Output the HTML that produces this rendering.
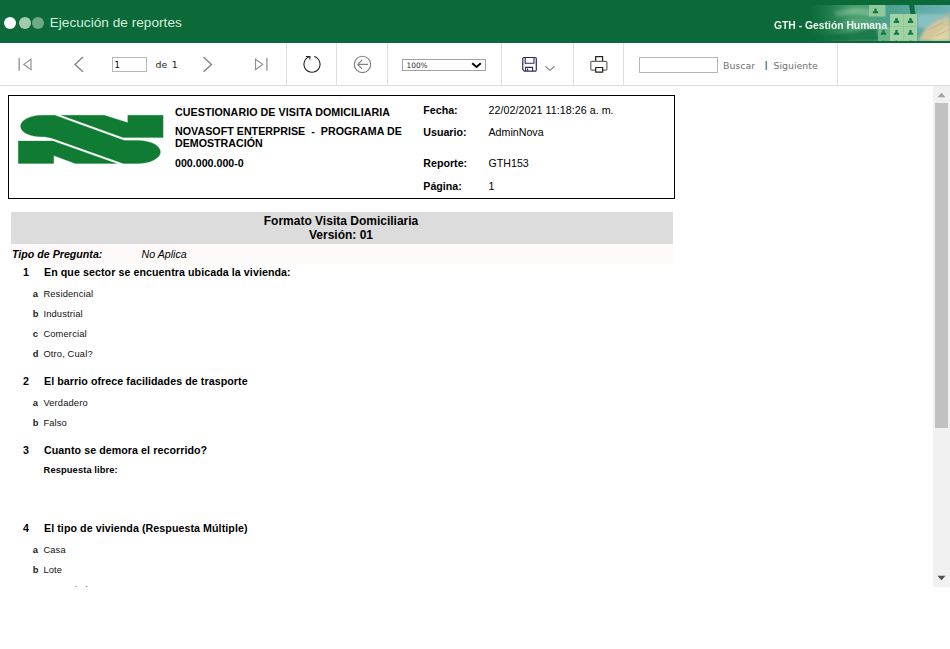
<!DOCTYPE html>
<html lang="es">
<head>
<meta charset="utf-8">
<title>Ejecución de reportes</title>
<style>
html,body{margin:0;padding:0;background:#fff;}
body{width:950px;height:649px;position:relative;overflow:hidden;font-family:"Liberation Sans",Arial,sans-serif;color:#000;}
.abs{position:absolute;white-space:nowrap;line-height:1;}
#hdr{position:absolute;left:0;top:0;width:950px;height:43px;background:#0b693a;overflow:hidden;}
#hdr .dot{position:absolute;top:17px;width:12px;height:12px;border-radius:50%;}
#title{left:49.7px;top:16px;font-size:13.6px;letter-spacing:0.03px;color:#d4eedb;}
#mod{left:774px;top:20px;font-size:11px;font-weight:bold;color:#eefaf0;transform-origin:0 0;transform:scaleX(0.94);}
#tb{position:absolute;left:0;top:43px;width:950px;height:42px;background:#fff;border-bottom:1px solid #dcdcdc;}
.sep{position:absolute;top:0;width:1px;height:42px;background:#e0e0e0;}
.vd{font-family:"DejaVu Sans",Verdana,sans-serif;}
#view{position:absolute;left:0;top:86px;width:933px;height:501px;overflow:hidden;background:#fff;}
#sb{position:absolute;left:933px;top:86px;width:17px;height:501px;background:#f1f1f1;}
.b{font-weight:bold;}
.t8{font-size:10.67px;}
.t7{font-size:9.33px;}
</style>
</head>
<body>
<div id="hdr">
  <!--PH--><svg class="abs" style="left:800px;top:5px" width="150" height="36" viewBox="800 5 150 36"><defs><linearGradient id="pf" gradientUnits="userSpaceOnUse" x1="808" y1="0" x2="852" y2="0"><stop offset="0" stop-color="#fff" stop-opacity="0"/><stop offset="1" stop-color="#fff" stop-opacity="1"/></linearGradient><mask id="pm" maskUnits="userSpaceOnUse" x="800" y="5" width="150" height="36"><rect x="800" y="5" width="150" height="36" fill="url(#pf)"/></mask><linearGradient id="pbg" gradientUnits="userSpaceOnUse" x1="820" y1="0" x2="950" y2="0"><stop offset="0" stop-color="#358d5e"/><stop offset="0.3" stop-color="#4c9f72"/><stop offset="0.55" stop-color="#4da290"/><stop offset="1" stop-color="#6fb2b4"/></linearGradient><filter id="bl" x="-5%" y="-20%" width="110%" height="140%"><feGaussianBlur stdDeviation="0.6"/></filter><filter id="bl2" x="-5%" y="-20%" width="110%" height="140%"><feGaussianBlur stdDeviation="1.6"/></filter></defs><g mask="url(#pm)"><rect x="800" y="5" width="150" height="36" fill="url(#pbg)"/><g filter="url(#bl2)"><path d="M800 41L800 33Q840 38 876 27L880 41z" fill="#126f42" opacity="0.8"/><path d="M834 11Q856 6 872 10L872 16Q856 12 836 17z" fill="#7dbb93" opacity="0.85"/><path d="M842 21Q860 17 876 24L874 28Q860 22 843 26z" fill="#62ab82" opacity="0.6"/><path d="M918 41L924 31Q934 19 950 13L950 41z" fill="#d3c698"/><path d="M930 41L940 31L950 25L950 41z" fill="#e0d3a8"/><path d="M917 14h33v3q-14 3-24 12l-9-2z" fill="#8cc3c6" opacity="0.9"/></g><g filter="url(#bl)"><path d="M909 5h5l1.500 9h-5z" fill="#0e6b45"/><path d="M932 20L950 14M928 30L944 22M936 36L950 29" stroke="#bfae80" stroke-width="0.800" fill="none"/><rect x="869" y="5" width="16.500" height="11.500" fill="#8fc99a"/><rect x="878" y="27" width="12" height="14" fill="#6db487"/><rect x="890" y="14" width="27" height="27" fill="#a2d2a3"/><path d="M903.500 14v27M890 26.500h27" stroke="#8cc696" stroke-width="0.800"/><circle cx="875.5" cy="9.7" r="1.32" fill="#117a4c"/><path d="M872.7 13.3q0-2.800 2.8-2.800q2.8 0 2.8 2.800z" fill="#117a4c"/><circle cx="896.5" cy="19.3" r="1.32" fill="#117a4c"/><path d="M893.7 22.9q0-2.800 2.8-2.800q2.8 0 2.8 2.800z" fill="#117a4c"/><circle cx="910.5" cy="19.3" r="1.32" fill="#117a4c"/><path d="M907.7 22.9q0-2.800 2.8-2.800q2.8 0 2.8 2.800z" fill="#117a4c"/><circle cx="896.5" cy="31.1" r="1.32" fill="#117a4c"/><path d="M893.7 34.7q0-2.800 2.8-2.800q2.8 0 2.8 2.800z" fill="#117a4c"/><circle cx="910.5" cy="31.1" r="1.32" fill="#117a4c"/><path d="M907.7 34.7q0-2.800 2.8-2.800q2.8 0 2.8 2.800z" fill="#117a4c"/><circle cx="883.5" cy="31.1" r="1.32" fill="#117a4c"/><path d="M880.7 34.7q0-2.800 2.8-2.800q2.8 0 2.8 2.800z" fill="#117a4c"/><circle cx="896.5" cy="41.7" r="1.32" fill="#117a4c"/><path d="M893.7 45.3q0-2.800 2.8-2.800q2.8 0 2.8 2.800z" fill="#117a4c"/><circle cx="910.5" cy="41.7" r="1.32" fill="#117a4c"/><path d="M907.7 45.3q0-2.800 2.8-2.800q2.8 0 2.8 2.800z" fill="#117a4c"/><circle cx="883.5" cy="41.7" r="1.32" fill="#117a4c"/><path d="M880.7 45.3q0-2.800 2.8-2.800q2.8 0 2.8 2.800z" fill="#117a4c"/></g></g></svg><!--/PH-->
  <div class="dot" style="left:4px;background:#ffffff;"></div>
  <div class="dot" style="left:18.5px;background:#a3cbb0;"></div>
  <div class="dot" style="left:32px;background:#6fa986;"></div>
  <div id="title" class="abs">Ejecución de reportes</div>
  <div id="mod" class="abs">GTH - Gestión Humana</div>
</div>

<div id="tb">
  <div class="sep" style="left:286px"></div>
  <div class="sep" style="left:336px"></div>
  <div class="sep" style="left:387px"></div>
  <div class="sep" style="left:501px"></div>
  <div class="sep" style="left:573px"></div>
  <div class="sep" style="left:623px"></div>
  <div class="sep" style="left:837px"></div>
  <svg id="ico" class="abs" style="left:0;top:0" width="950" height="42" viewBox="0 43 950 42" fill="none">
    <!-- first -->
    <path d="M19.200 58V70.700" stroke="#909090" stroke-width="1.300"/>
    <path d="M31 59.200L23.800 64.400L31 69.600z" stroke="#909090" stroke-width="1.150"/>
    <!-- prev -->
    <path d="M83 57.100L75 64.400L83 71.700" stroke="#848484" stroke-width="1.400"/>
    <!-- next -->
    <path d="M203.500 57.100L211.500 64.400L203.500 71.700" stroke="#848484" stroke-width="1.400"/>
    <!-- last -->
    <path d="M266.900 58V70.700" stroke="#909090" stroke-width="1.300"/>
    <path d="M255.500 59.200L262.700 64.400L255.500 69.600z" stroke="#909090" stroke-width="1.150"/>
    <!-- refresh -->
    <path d="M314.200 56.600A8 8 0 1 1 309.800 56.600" stroke="#222" stroke-width="1.050"/>
    <path d="M306 56.500H309.900V59.600" stroke="#222" stroke-width="1.100"/>
    <!-- back -->
    <circle cx="362.500" cy="64.400" r="8.200" stroke="#808080" stroke-width="1.100"/>
    <path d="M357.800 64.400h10.200M362 60L357.700 64.400L362 68.800" stroke="#808080" stroke-width="1.100"/>
    <!-- save -->
    <path d="M523.800 57.500h11.500q1 0 1 1v11.600q0 1-1 1h-11l-1.500-1.500v-11.100q0-1 1-1z" stroke="#2e2a55" stroke-width="1.200"/>
    <path d="M525.200 57.500v5.800h8.800v-5.800" stroke="#2e2a55" stroke-width="1.100"/>
    <path d="M525.600 71v-3.600h7v3.600M527.600 68.500v2.200" stroke="#2e2a55" stroke-width="1.100"/>
    <path d="M545.500 66.300L550 70.300L554.500 66.300" stroke="#777" stroke-width="1.100"/>
    <!-- print -->
    <path d="M595.700 61.300v-4.600h6.900v4.600" stroke="#222" stroke-width="1.200"/>
    <path d="M595.700 70.200h-3.800q-1.100 0-1.100-1.100v-6.700q0-1.100 1.100-1.100h13.900q1.100 0 1.100 1.100v6.700q0 1.100-1.100 1.100h-3.200" stroke="#6a6a5a" stroke-width="1.200"/>
    <path d="M595.700 67.500h6.900v4.700h-6.900z" stroke="#222" stroke-width="1.200"/>
  </svg>
  <div class="abs" style="left:112px;top:14px;width:33px;height:13px;border:1px solid #b8b8b8;"></div>
  <div class="abs vd" style="left:114.500px;top:18px;font-size:8.500px;">1</div>
  <div class="abs vd" style="left:155.500px;top:17px;font-size:9.400px;color:#222;word-spacing:1.500px;">de 1</div>
  <div class="abs" style="left:402px;top:16px;width:82px;height:10px;border:1px solid #a2a2a2;"></div>
  <div class="abs vd" style="left:406.500px;top:19px;font-size:7.400px;color:#2a2a2a;">100%</div>
  <svg class="abs" style="left:469.700px;top:18px" width="14" height="8" viewBox="0 0 14 8" fill="none"><path d="M2.200 2.300L6.500 6L10.800 2.300" stroke="#000" stroke-width="2"/></svg>
  <div class="abs" style="left:639px;top:14px;width:77px;height:14px;border:1px solid #b5b5b5;"></div>
  <div class="abs vd" style="left:723px;top:18px;font-size:9.400px;color:#727272;">Buscar</div>
  <div class="abs vd" style="left:764.6px;top:18px;font-size:9px;color:#134b6b;font-weight:bold;">|</div>
  <div class="abs vd" style="left:773.500px;top:18px;font-size:9.400px;color:#727272;">Siguiente</div>
</div>

<div id="view">
  <div id="rpt" style="position:absolute;left:0;top:-86px;width:933px;height:700px;">
    <div class="abs" style="left:8px;top:95px;width:665px;height:102px;border:1px solid #000;"></div>
    <div class="abs" style="left:11px;top:212px;width:662px;height:32px;background:#dcdcdc;"></div>
    <div class="abs" style="left:11px;top:244px;width:662px;height:20px;background:#fffafa;"></div>
    <!--LG--><svg class="abs" style="left:10px;top:108px" width="160" height="62" viewBox="10 108 160 62"><g fill="#0f7b33" stroke="#0f7b33" stroke-width="0.3"><path d="M42 115.2H54.7L124.4 140.5H138C150.5 140.5 160.4 145.6 160.4 152C160.4 158.3 150.5 163.4 138 163.4H123.2L52 138.2L45 136.800H42C30 136.800 20.600 132.200 20.600 126.300C20.600 120.200 30 115.200 42 115.200Z"/><path d="M61.3 115.2H104.3L127.8 122.8V115.2H163.1V137.6H123Z"/><path d="M18.3 141H53L116.400 163.4H75.2L53.7 155.5V163.4H18.3Z"/></g></svg><!--/LG-->
    <!--RT-->
    <div class="abs b" style="left:175px;top:107px;font-size:10.67px;letter-spacing:0.07px;">CUESTIONARIO DE VISITA DOMICILIARIA</div>
    <div class="abs b" style="left:175px;top:126px;font-size:10.67px;letter-spacing:0.04px;">NOVASOFT ENTERPRISE &nbsp;- &nbsp;PROGRAMA DE</div>
    <div class="abs b" style="left:175px;top:138px;font-size:10.67px;">DEMOSTRACIÓN</div>
    <div class="abs b" style="left:175px;top:158px;font-size:10.67px;">000.000.000-0</div>
    <div class="abs b" style="left:423.3px;top:105px;font-size:10.67px;">Fecha:</div>
    <div class="abs b" style="left:423.3px;top:127px;font-size:10.67px;">Usuario:</div>
    <div class="abs b" style="left:423.3px;top:158px;font-size:10.67px;">Reporte:</div>
    <div class="abs b" style="left:423.3px;top:181px;font-size:10.67px;">Página:</div>
    <div class="abs " style="left:488.5px;top:105px;font-size:10.67px;letter-spacing:0.06px;">22/02/2021 11:18:26 a. m.</div>
    <div class="abs " style="left:488.5px;top:127px;font-size:10.67px;">AdminNova</div>
    <div class="abs " style="left:488.5px;top:158px;font-size:10.67px;">GTH153</div>
    <div class="abs " style="left:488.5px;top:181px;font-size:10.67px;">1</div>
    <div class="abs b" style="left:12px;top:249px;font-size:10.67px;font-style:italic;">Tipo de Pregunta:</div>
    <div class="abs " style="left:141.5px;top:249px;font-size:10.67px;font-style:italic;">No Aplica</div>
    <div class="abs b" style="left:23px;top:267px;font-size:10.67px;">1</div>
    <div class="abs b" style="left:44px;top:267px;font-size:10.67px;letter-spacing:0.07px;">En que sector se encuentra ubicada la vivienda:</div>
    <div class="abs b" style="left:23px;top:376px;font-size:10.67px;">2</div>
    <div class="abs b" style="left:44px;top:376px;font-size:10.67px;letter-spacing:0.07px;">El barrio ofrece facilidades de trasporte</div>
    <div class="abs b" style="left:23px;top:445px;font-size:10.67px;">3</div>
    <div class="abs b" style="left:44px;top:445px;font-size:10.67px;letter-spacing:0.07px;">Cuanto se demora el recorrido?</div>
    <div class="abs b" style="left:23px;top:523px;font-size:10.67px;">4</div>
    <div class="abs b" style="left:44px;top:523px;font-size:10.67px;letter-spacing:0.07px;">El tipo de vivienda (Respuesta Múltiple)</div>
    <div class="abs b" style="left:32.8px;top:290px;font-size:9.33px;color:#1a1a1a;">a</div>
    <div class="abs " style="left:43.4px;top:290px;font-size:9.33px;color:#111;letter-spacing:0.15px;">Residencial</div>
    <div class="abs b" style="left:32.8px;top:310px;font-size:9.33px;color:#1a1a1a;">b</div>
    <div class="abs " style="left:43.4px;top:310px;font-size:9.33px;color:#111;letter-spacing:0.15px;">Industrial</div>
    <div class="abs b" style="left:32.8px;top:330px;font-size:9.33px;color:#1a1a1a;">c</div>
    <div class="abs " style="left:43.4px;top:330px;font-size:9.33px;color:#111;letter-spacing:0.15px;">Comercial</div>
    <div class="abs b" style="left:32.8px;top:350px;font-size:9.33px;color:#1a1a1a;">d</div>
    <div class="abs " style="left:43.4px;top:350px;font-size:9.33px;color:#111;letter-spacing:0.15px;">Otro, Cual?</div>
    <div class="abs b" style="left:32.8px;top:399px;font-size:9.33px;color:#1a1a1a;">a</div>
    <div class="abs " style="left:43.4px;top:399px;font-size:9.33px;color:#111;letter-spacing:0.15px;">Verdadero</div>
    <div class="abs b" style="left:32.8px;top:419px;font-size:9.33px;color:#1a1a1a;">b</div>
    <div class="abs " style="left:43.4px;top:419px;font-size:9.33px;color:#111;letter-spacing:0.15px;">Falso</div>
    <div class="abs b" style="left:32.8px;top:546px;font-size:9.33px;color:#1a1a1a;">a</div>
    <div class="abs " style="left:43.4px;top:546px;font-size:9.33px;color:#111;letter-spacing:0.15px;">Casa</div>
    <div class="abs b" style="left:32.8px;top:566px;font-size:9.33px;color:#1a1a1a;">b</div>
    <div class="abs " style="left:43.4px;top:566px;font-size:9.33px;color:#111;letter-spacing:0.15px;">Lote</div>
    <div class="abs b" style="left:32.8px;top:586px;font-size:9.33px;color:#1a1a1a;">c</div>
    <div class="abs " style="left:43.4px;top:585.5px;font-size:9.33px;color:#111;letter-spacing:0.15px;">Cuarto indep.</div>
    <div class="abs b" style="left:43.6px;top:466px;font-size:9.33px;letter-spacing:0.1px;">Respuesta libre:</div>
    <div class="abs b" style="left:10px;top:215px;width:662px;text-align:center;font-size:12px;">Formato Visita Domiciliaria</div>
    <div class="abs b" style="left:10px;top:229px;width:662px;text-align:center;font-size:12px;">Versión: 01</div>
    <!--/RT-->
  </div>
</div>

<div id="sb">
  <div class="abs" style="left:2px;top:17px;width:13px;height:325px;background:#c1c1c1;"></div>
  <svg class="abs" style="left:0;top:0" width="17" height="501" viewBox="0 0 17 501"><path d="M4.500 11.200L8.500 6.700L12.500 11.200z" fill="#a3a3a3"/><path d="M4.500 489.800L8.500 494.300L12.500 489.800z" fill="#505050"/></svg>
</div>
</body>
</html>
